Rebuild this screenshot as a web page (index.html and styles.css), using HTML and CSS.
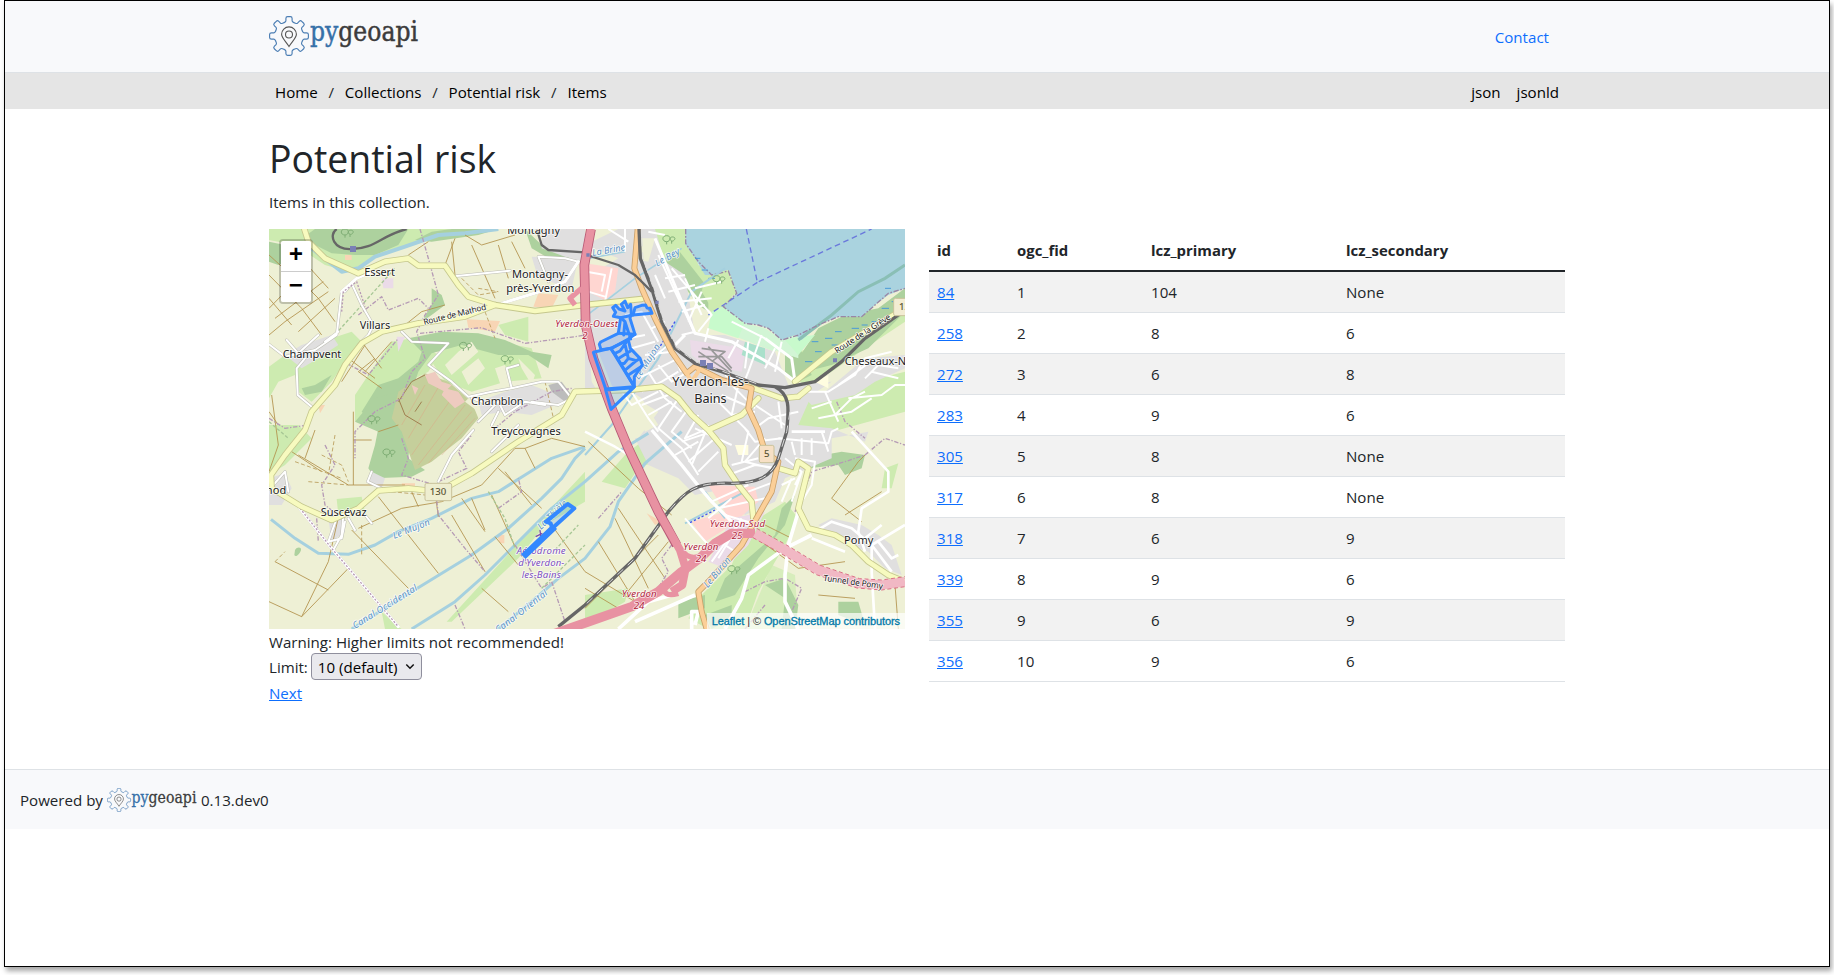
FILE: index.html
```html
<!DOCTYPE html>
<html lang="en">
<head>
<meta charset="utf-8">
<title>Potential risk - pygeoapi</title>
<link rel="stylesheet" href="styles.css">
</head>
<body>
<svg class="defs" width="0" height="0" aria-hidden="true">
  <defs>
    <path id="tooth" d="M-5.5-13C-4.6-13.8-3.1-13.7-3.1-15.2V-17.5Q-3.1-19.4-1.4-19.4H1.4Q3.1-19.4 3.1-17.5V-15.2C3.1-13.7 4.6-13.8 5.5-13"/>
    <symbol id="logo" viewBox="0 0 150 40">
      <g fill="none" stroke="#4a7db3" stroke-width="1.15" transform="translate(20 20)">
        <use href="#tooth"/><use href="#tooth" transform="rotate(45)"/><use href="#tooth" transform="rotate(90)"/><use href="#tooth" transform="rotate(135)"/>
        <use href="#tooth" transform="rotate(180)"/><use href="#tooth" transform="rotate(225)"/><use href="#tooth" transform="rotate(270)"/><use href="#tooth" transform="rotate(315)"/>
      </g>
      <g fill="none" stroke="#555" stroke-width="1.1">
        <path d="M20 30.5C17 25.500 12.600 22 12.600 18.300A7.400 7.400 0 0 1 27.400 18.300C27.400 22 23 25.500 20 30.500Z"/>
        <circle cx="20" cy="18.500" r="3.500"/>
      </g>
      <text x="41" y="25.300" class="logo-text" textLength="108" lengthAdjust="spacingAndGlyphs"><tspan class="py">py</tspan><tspan class="geo">geoapi</tspan></text>
    </symbol>
  </defs>
</svg>
<div class="page">
  <header class="top">
    <div class="container top-row">
      <svg class="logo" role="img" aria-label="pygeoapi"><use href="#logo"/></svg>
      <a class="contact" href="#">Contact</a>
    </div>
  </header>
  <div class="crumbs">
    <div class="container crumbs-row">
      <nav class="trail"><a href="#">Home</a><span>/</span><a href="#">Collections</a><span>/</span><a href="#">Potential risk</a><span>/</span><a href="#">Items</a></nav>
      <nav class="formats"><a href="#">json</a><a href="#">jsonld</a></nav>
    </div>
  </div>
  <main class="container main">
    <h1>Potential risk</h1>
    <p class="lead">Items in this collection.</p>
    <div class="cols">
      <section class="col">
        <div class="map">
          <svg class="tiles" viewBox="12 12 1908 1200" preserveAspectRatio="none">
            <rect x="0" y="0" width="1930" height="1230" fill="#eef0d5"/>
            <!-- grass -->
            <g fill="#cdebb0">
              <path d="M12 12H560L440 55 300 110 285 150 180 120 90 60 12 45Z"/>
              <path d="M12 425L60 390 110 420 200 340 260 320 290 350 240 410 200 470 140 530 100 500 90 450 40 470 12 520Z"/>
              <path d="M380 350L440 340 520 390 490 440 430 470 370 520 270 590 270 510 330 420Z"/>
              <path d="M560 330L700 350 800 370 830 460 720 470 620 500 540 470 500 410Z"/>
              <path d="M700 300L790 275 790 350 720 330Z"/>
              <path d="M12 600L100 600 140 640 60 720 12 750Z"/>
              <path d="M215 822L290 815 300 860 220 870Z"/>
              <path d="M750 965L960 740 960 830 840 900 760 1000 560 1190 545 1190Z"/>
              <path d="M350 1160L400 1205 410 1212 360 1212Z"/>
              <path d="M1010 770L1080 690 1180 610 1290 615 1240 680 1120 730 1080 790Z"/>
              <path d="M1440 1212L1480 1100 1530 1010 1560 960 1600 880 1560 830 1450 900 1400 1020 1310 1110 1270 1180 1330 1212Z"/>
              <path d="M1560 440L1600 380 1700 350 1920 200 1920 290 1800 370 1700 440 1620 480Z"/>
              <path d="M1600 520L1920 440 1920 560 1720 615 1560 640 1540 580Z"/>
              <path d="M960 1110L1090 1090 1080 1130 960 1200Z"/>
              <path d="M1150 12H1262L1300 120 1370 170 1410 230 1350 270 1200 140 1130 100Z"/>
              <path d="M1860 730L1900 715 1880 790 1850 790Z"/>
              <path d="M1520 1020L1590 1050 1600 1212 1440 1212Z" opacity=".7"/>
            </g>
            <!-- woods -->
            <g fill="#add19e">
              <path d="M150 12H430L400 60 330 90 270 90 200 85 150 60 125 30Z"/>
              <path d="M12 50L60 60 90 100 40 120 12 110Z"/>
              <path d="M430 340L530 320 640 325 720 345 800 380 860 390 850 430 790 390 700 390 590 360 500 385 460 440 440 500 400 540 440 600 430 700 480 735 440 755 330 760 310 730 330 660 340 610 290 560 340 480 400 460 460 410 470 380Z"/>
              <path d="M270 590L330 520 400 500 380 560 410 620 340 620Z"/>
              <path d="M450 45L500 20 560 12H700L640 30 500 50Z"/>
              <path d="M780 12L830 60 900 80 950 90 940 110 860 105 800 70Z"/>
              <path d="M1200 110L1240 75 1330 190 1330 260 1300 240Z"/>
              <path d="M1660 310L1740 270 1840 250 1920 190V260L1810 370 1700 420 1620 440 1600 400Z"/>
              <path d="M1530 930L1550 850 1590 810 1560 900 1480 1000 1410 1110 1350 1130 1380 1060Z"/>
              <path d="M1620 700L1730 680 1800 690 1790 730 1740 750 1720 720 1630 730Z"/>
              <path d="M1240 1130L1320 1110 1320 1150 1240 1180Z"/>
              <path d="M1500 1080L1560 1060 1600 1140 1590 1212H1550L1560 1120Z"/>
              <path d="M1320 1170L1400 1140 1400 1180 1340 1212Z"/>
              <path d="M1720 1130L1780 1130 1800 1200 1720 1170Z"/>
              <path d="M1560 340L1610 380 1640 450 1600 470 1560 440Z"/>
              <path d="M500 190L530 210 540 240 500 270 470 290 500 240Z"/>
              <path d="M90 975C95 965 110 965 108 975S92 1000 88 990Z"/>
              <path d="M110 490L150 480 200 450 170 500 120 510Z"/>
            </g>
            <!-- scrub and orchard on the hill -->
            <path fill="#c5cf9b" d="M480 445L550 470 620 530 640 580 590 640 500 710 450 735 410 620 380 580 400 500Z"/>
            <g stroke="#e0a080" stroke-width="1.500" opacity=".8"><path d="M410 600L480 480M430 640L530 470M440 690L560 520M460 720L600 540M490 715L620 560M530 690L630 580"/></g>
            <g stroke="#a08050" stroke-width="3" fill="none"><path d="M400 530L440 470 480 450M400 520L420 570 470 600M450 560L470 530"/></g>
            <g fill="#eecbc0"><path d="M480 450L510 440 530 470 560 480 540 500 490 475ZM540 490L580 500 600 530 570 550 530 510ZM440 480L460 490 450 510Z"/></g>
            <g fill="#eef0d5"><path d="M540 420L580 380 620 350 640 380 560 450ZM590 440L640 400 660 430 610 480ZM690 430L720 420 740 480 710 490ZM760 400L810 450 800 480 770 430ZM640 560L600 530 620 510Z"/></g>
            <!-- built-up areas -->
            <g fill="#e0dfdf">
              <path d="M60 390L110 360 200 330 220 360 160 400 110 430Z"/>
              <path d="M830 12H960V110L900 95 830 70ZM800 95L940 100 920 190 820 160Z"/>
              <path d="M1060 12H1170L1200 110 1260 150 1290 330 1380 330 1530 380 1570 480 1700 470 1640 510 1600 600 1700 610 1800 650 1810 620 1700 640 1700 700 1560 760 1530 830 1440 870 1370 780 1180 690 1120 640 1180 560 1080 500 960 500 960 60Z"/>
              <path d="M1680 500L1800 400 1920 390 1920 430 1830 470 1770 510 1640 540 1600 500Z"/>
              <path d="M640 530L720 500 800 480 850 500 900 490 920 520 800 570 720 560 650 570Z"/>
              <path d="M12 760L60 745 80 790 50 840 12 840ZM190 880L240 870 240 920 200 950Z"/>
              <path d="M320 740L360 760 350 790 310 780Z"/>
              <path d="M1660 900L1700 880 1790 900 1840 930 1880 960 1910 1050 1860 1030 1810 980 1750 960Z"/>
              <path d="M1110 640L1240 615 1390 790 1290 810 1240 760 1150 720Z"/>
            </g>
            <path fill="#bcbcbc" d="M850 480L890 470 920 510 900 530 860 500Z"/>
            <g fill="#eef0d5"><path d="M1120 40H1170L1150 110 1100 100ZM970 330L1000 380 1040 480 1110 620 1080 640 980 470ZM1100 500L1130 520 1180 600 1140 620ZM960 60L1060 100 1010 130 960 130Z"/></g>
            <g fill="#ffd6d1"><path d="M1330 780L1470 785 1480 830 1400 900 1320 950 1280 890 1380 860ZM960 115L1060 130 1050 200 1020 225 970 200Z"/></g>
            <g fill="#ebdbe8"><path d="M1275 345L1400 365 1400 440 1330 430 1280 390ZM350 160H385V190H355ZM395 335H420L400 380Z"/><path d="M1400 880L1500 860 1450 960 1380 1030 1330 1010ZM1400 360L1440 380 1430 440 1370 430Z"/></g>
            <g fill="#f8d5b5"><path d="M605 283L705 288 690 320 610 308ZM820 205L880 210 860 250 805 245ZM240 90H260V105H240ZM160 540H180L165 565ZM695 930H718V955H705ZM1145 865L1190 890 1170 900ZM410 775H450V795H415Z"/></g>
            <g fill="#d2f5d5"><path d="M1330 270L1380 245 1440 295 1500 310 1560 350 1530 380 1400 330ZM1500 340L1600 330 1600 400 1540 380Z"/></g>
            <g fill="#c8facc"><path d="M1340 260L1380 240 1440 290 1420 340 1330 310ZM1560 345L1600 335 1650 330 1600 390Z"/></g>
            <path fill="#aae0cb" d="M1440 350L1500 370 1500 420 1430 390Z"/>
            <g fill="#fffde0"><path d="M1410 660H1450V690H1420ZM1290 420L1330 430 1320 450ZM1650 470L1690 450V490Z"/></g>
            <!-- lake -->
            <path fill="#aad3df" d="M1262 12V60L1290 100 1320 150 1350 150 1390 135 1415 205 1375 245 1440 295 1480 300 1510 310 1550 345 1590 330 1610 345 1660 300 1720 275 1790 275 1830 240 1870 210 1920 190V12Z"/>
            <path fill="#cdebb0" d="M1320 160L1365 140 1390 135 1415 205 1340 250 1310 200Z"/>
            <path fill="none" stroke="#8abfb5" stroke-width="9" d="M1600 345L1700 270 1780 200 1860 160 1920 120"/>
            <path fill="none" stroke="#9a86a5" stroke-width="4" stroke-dasharray="16 5 5 5" d="M1262 12V55L1300 110 1340 150 1362 145 1390 138 1415 205 1375 245 1440 295 1480 300 1510 310 1550 345 1600 330 1660 300 1720 275 1790 275 1830 240 1870 205 1920 190"/>
            <path fill="none" stroke="#6a78dc" stroke-width="4" stroke-dasharray="17 11" d="M1444 12L1477 172 1820 12M1477 172L1330 270"/>
            <g stroke="#4a9bd8" stroke-width="3"><path d="M1310 135h18M1330 160h20M1290 100h16M1640 350h20M1680 340h22M1700 360h24M1650 380h20M1710 320h20M1760 310h22M1820 290h20M1740 345h18M1620 410h22M1670 400h18M1850 250h22M1880 230h18M1790 300h18M1690 380h20M1860 190h18"/></g>
            <!-- streams and canals -->
            <g fill="none" stroke="#a5d0df" stroke-linejoin="round" stroke-width="9">
              <path d="M140 70L230 140 280 130 330 95 420 65 520 30 600 25 700 12" stroke-width="12"/>
              <path d="M18 883L90 940 160 985 250 988 330 960 400 920 500 880 620 820 700 800 780 750 860 700 960 665"/>
              <path d="M260 1212L440 1100 620 990 730 910 830 820 890 760 930 700 960 670"/>
              <path d="M440 1212L570 1130 660 1050 750 960 860 850 960 770 1060 680 1150 625"/>
              <path d="M700 1212L800 1130 880 1060 960 1000 1035 905 1060 830 1140 715 1250 620"/>
              <path d="M960 690L1040 600 1110 500 1180 400 1225 310 1280 200 1380 130M1320 800L1380 880M1260 895L1440 800" stroke-width="6"/>
              <path d="M940 290L1020 230 1110 160 1250 70M970 100L1080 80" stroke-width="5"/>
            </g>
            <path fill="none" stroke="#4055ee" stroke-width="4" stroke-dasharray="7 6" d="M1230 290L1170 390 1150 415M1275 893L1350 855"/>
            <!-- farm tracks and footpaths -->
            <g fill="none" stroke="#b3924c" stroke-width="2.600">
              <path d="M12 250L130 130M30 280L175 170M12 330L60 290 190 200M100 320L210 220M12 150L110 250 170 330M50 110L160 220 210 290M90 80L190 190M12 220L80 300M12 90L100 170"/>
              <path d="M250 400L330 460M290 350L350 430M300 360L230 470M330 400L280 440 350 490M380 350L300 440M420 300L470 260 540 240"/>
              <path d="M490 50L430 90M570 40L540 120M600 30L650 60 750 30M620 60L690 220M560 50L570 150M700 60L730 160M740 50L780 130"/>
              <path d="M12 560L40 600M80 680L170 740M150 615L120 700M265 560V780M265 645H320M100 690L250 780 420 780M620 820L660 915M700 730L830 850M590 820L660 920M440 800L460 845M510 800L520 875"/>
              <path d="M280 910L410 850 530 830 650 780 750 670 780 670 860 640 960 665M340 815L520 1045M260 915L430 1090M225 855L190 1010 110 1175M30 1010L190 1095M250 1030L110 1175 12 1130M560 870L660 1040M680 810L750 965M720 740L800 840M780 670L810 730M650 1090L730 1160M860 900L960 1040M690 935L760 1020"/>
              <path d="M20 510L40 660 12 740M340 620L400 600"/>
              <path d="M960 1090L1060 1150M960 1040L1110 1130M1050 880L1150 1090M1000 950L1110 1130M960 1150L1180 930M1080 1110L1210 950M1120 790L1220 870M1060 850L1200 1060M1700 820L1780 710 1800 690M1700 820L1790 890M1490 950L1600 1030 1740 1010M1660 1110L1770 1120M1890 1080L1900 1212M1500 900L1580 940M970 650L1120 790M1740 870L1850 800"/>
            </g>
            <g fill="none" stroke="#b3924c" stroke-width="2.300" stroke-dasharray="12 7">
              <path d="M170 690L230 720 250 770M130 770L250 780M90 710L230 760M210 630L190 750M640 190L700 200M590 160L640 210 700 200M660 260L690 340M290 900V990M30 1010L60 980M840 470L870 600M380 800L480 810"/>
            </g>
            <g fill="none" stroke="#b59ab5" stroke-width="4" stroke-dasharray="13 5 4 5">
              <path d="M465 12L490 100 520 210 480 270 455 320 480 400 440 440 410 520 330 560 270 620 270 700M280 270L350 215 370 255 460 220 490 250M465 325L650 308 780 355 930 335 960 330M245 415L310 450 400 340M410 640L430 700 410 750 510 780 520 870 600 970 660 1040M180 660L210 720 170 780 180 840 230 880M155 880L160 950M520 770L605 730 580 680 620 630M700 850L770 800 760 760M750 960L830 1090 860 1070 900 1190M570 1140L600 1212M12 580L60 610 130 600M690 610L750 560 860 500 920 490"/>
              <path d="M1220 960L1190 1000 1210 1040 1160 1120M1590 860L1640 740 1740 710 1800 690 1860 640 1920 660M1440 1100L1500 1070 1560 1060 1610 1090 1580 1160M1715 530L1740 590 1800 640M1500 1140L1440 1212M1000 880L1070 800"/>
            </g>
            <path fill="none" stroke="#a7c795" stroke-width="4" stroke-dasharray="10 6" d="M12 590L70 640M200 340L390 130M670 800L720 880 750 970M870 975L940 900M830 1090L960 960"/>
            <!-- minor roads -->
            <g fill="none" stroke="#bdbdb4" stroke-linejoin="round" stroke-linecap="round">
              <g stroke-width="9">
                <path id="minor" d="M12 358L60 395 150 375 215 330 230 200 275 160 320 140M65 345L100 385 160 330M120 400L95 430 98 510 140 545M180 350L220 320M240 200L260 175 290 240 325 300 310 330 280 360M410 320L440 350 550 355 490 420 560 470 610 515 680 500 740 490 830 470 880 470 920 520 880 540 800 530M740 490L725 430 760 420M640 590L700 530 720 570 780 530 840 540M680 600L700 560M620 520L680 540M710 235L840 195 900 170 940 110 900 100 820 95 850 170M575 153L735 137M625 615L560 690 520 770M680 680L760 600M320 740L308 770 350 790M100 845L200 970 400 1205M215 880L190 950 230 940 240 890M205 975L230 930 235 870M250 880L270 915M300 870L320 895M25 780L60 740 70 800"/>
              </g>
            </g>
            <g fill="none" stroke="#fff" stroke-linejoin="round" stroke-linecap="round" stroke-width="6">
              <use href="#minor"/>
              <path stroke-width="9" d="M230 200L275 160 320 140M710 235L840 195 900 170 940 110M100 845L200 970 400 1205"/>
            </g>
            <path fill="none" stroke="#b79ab5" stroke-width="4" stroke-dasharray="6 5" d="M230 260L235 200 275 170 300 245M105 850L200 970 400 1205"/>
            <!-- town streets -->
            <g fill="none" stroke="#fff" stroke-width="6" stroke-linejoin="round">
              <path d="M965 140L1020 150 1010 200M970 200L1020 215M1030 12L1090 50M1080 12V80M1040 130L1020 230M1180 90L1230 200 1290 325M1200 160L1260 150M1210 200L1290 180M1240 230L1340 220M1250 260L1320 240M1270 290L1310 200M1220 130L1340 270 1300 320M1260 160L1310 270M1170 150L1200 220M1150 20L1200 30M1290 320L1250 330M1370 170L1290 190"/>
              <path stroke-width="9" d="M1170 40L1290 325 1400 350 1540 430 1590 470M1500 340L1580 400 1590 470M1260 330L1220 370 1250 440"/>
              <path d="M1420 345L1390 400M1450 350L1440 430M1490 330L1450 440M1530 370L1500 430M1330 310L1320 350M1400 290L1500 340M1550 350L1530 440M1380 450L1440 480M1450 440L1430 490"/>
              <path d="M1090 340L1140 330M1100 370L1170 350M1080 270L1130 260 1180 350M1160 250L1220 350 1140 420M1200 290L1160 310M1140 390L1220 380M1120 460L1240 400M1130 500L1190 470 1240 440M1100 500L1150 580 1180 620M1150 440L1200 520 1250 560M1180 420L1220 470 1270 440M1070 500L1100 540 1180 500M1130 540L1210 510M1150 570L1220 530"/>
              <path d="M1240 520L1180 610 1250 670 1300 750M1270 550L1220 620 1280 670M1300 570L1260 640 1330 610M1330 600L1280 720M1290 610L1400 660M1250 650L1340 620M1230 690L1300 650M1270 710L1350 640M1300 740L1360 680M1350 520L1400 570 1470 560M1390 470L1470 550M1370 510L1440 540M1420 480L1400 570M1470 610L1510 580 1600 560M1440 610L1470 650 1550 640M1400 570L1450 620 1430 710M1500 640L1440 710 1520 730M1470 540L1560 600M1540 530L1550 610M1390 750L1470 720 1540 730M1450 800L1530 770M1400 720L1480 700"/>
              <path stroke-width="10" d="M1160 615L1250 720 1290 770 1340 830 1400 890"/>
              <path stroke-width="7" d="M1100 695L1050 665 960 620"/>
              <path d="M1340 830L1450 780M1360 850L1500 820M1330 880L1400 820M1380 870L1480 900M1430 880L1390 940 1340 1010M1420 900L1360 1000M1380 960L1410 980M1260 880L1330 960"/>
              <path d="M1540 640L1690 655 1700 620 1720 610M1580 650L1590 690M1610 640V690M1640 640V690M1670 620L1690 680M1580 760L1550 830M1610 740L1580 830M1560 700L1610 740 1590 780M1550 780L1590 760M1590 700L1650 710 1640 780 1610 830"/>
              <path d="M1620 500L1690 500 1770 450 1800 400 1880 380M1680 500L1720 590M1720 480L1830 400M1750 520L1850 510 1890 480 1920 480M1800 460L1840 420 1900 430M1660 580L1760 560 1820 520M1710 570L1760 520 1800 500M1820 440L1900 460M1640 550L1700 530"/>
              <path stroke-width="11" d="M1600 860L1570 960 1560 1050 1560 1130 1600 1212M1640 930L1560 970 1450 1050 1430 1120 1380 1212M1240 1105L1150 1130 1060 1212M1290 1110L1200 1150 1110 1190M1280 1212L1280 1160 1300 1160 1290 1200"/>
              <path stroke-width="8" d="M1760 620L1870 740 1870 800 1790 850 1780 920 1800 980M1650 920L1700 890 1760 910 1820 960 1920 900M1820 960V1040L1830 1212M1640 940L1740 980M1820 960L1880 1040M1840 950L1880 1000 1900 990M1800 940L1850 900M1580 620L1680 620"/>
            </g>
            <!-- secondary and primary roads -->
            <g fill="none" stroke-linejoin="round" stroke-linecap="round">
              <g stroke="#c5c78d" stroke-width="19"><path id="yA" d="M118 12L130 50 180 100 280 145 360 110 430 100 460 122 540 122 580 180 610 215 690 240 810 258 960 240 1130 222M460 295L350 320 290 355 240 420 210 480 140 560 120 615 60 690 18 750 20 790 110 845 200 885 280 850 340 797 430 790 520 800 620 745 760 650 890 570 930 500 1090 495 1190 485 1240 520 1280 570 1330 615 1430 570 1480 520M690 240L600 275 460 295M1590 470L1700 380 1920 250M1330 615L1375 670 1380 720 1420 780 1460 830 1465 880"/><path id="yB" d="M1440 480L1550 520 1600 515M1540 730L1590 745 1600 710 1630 730 1620 770 1600 850 1630 910 1710 930 1760 960 1810 1010 1870 1050 1920 1070M1600 515L1630 490"/></g>
              <g stroke="#f7fabf" stroke-width="14"><use href="#yA"/><use href="#yB"/></g>
              <g stroke="#c9a06a" stroke-width="18"><path id="oA" d="M1118 12L1108 130 1130 190 1170 280 1220 380 1265 445 1290 425 1370 465 1460 490 1450 550 1480 615 1500 680 1540 710 1520 800 1480 870 1430 960 1340 1060 1300 1100 1310 1160 1325 1212"/></g>
              <path d="M1118 12L1108 130 1130 190 1170 280 1220 380 1265 445 1290 425 1370 465 1460 490 1450 550 1480 615 1500 680 1540 710 1520 800 1480 870 1430 960 1340 1060 1300 1100 1310 1160 1325 1212" stroke="#fbcf98" stroke-width="13"/>
              <path d="M1265 445L1280 470 1300 440" stroke="#fbcf98" stroke-width="12"/>
            </g>
            <!-- railway -->
            <g fill="none" stroke="#666" stroke-linejoin="round">
              <path stroke-width="7" d="M215 12C190 30 205 75 260 72C330 72 350 30 425 12M815 12L830 60 850 75 960 82M965 90L1060 120 1110 150 1160 200"/>
              <path stroke-width="10" d="M1122 12L1126 100 1160 190 1190 290 1230 370 1290 415 1370 440 1480 480 1560 488 1650 470 1730 410 1800 340 1900 270 1920 255M1530 485C1580 510 1570 560 1565 620L1540 700C1520 760 1470 775 1400 775C1290 770 1260 800 1210 860L1110 1000 960 1140 880 1205"/>
              <path stroke="#ddd" stroke-width="3" stroke-dasharray="24 18" d="M1130 40L1134 100 1165 190 1196 290 1235 370 1290 410 1370 438 1480 478M1575 560L1565 620 1540 700C1520 760 1470 775 1400 775C1290 770 1260 800 1210 860L1110 1000 960 1140"/>
              <path stroke="#999" stroke-width="5" d="M1300 380L1390 440M1310 370L1380 380 1340 410M1300 395H1370L1400 430M1330 365L1400 440"/>
            </g>
            <!-- motorway -->
            <g fill="none" stroke-linejoin="round">
              <path stroke="#b85a76" stroke-width="29" d="M978 12L958 120 962 300 985 400 1040 550 1090 670 1180 860 1235 960"/>
              <path stroke="#e892a2" stroke-width="24" d="M978 12L958 120 962 300 985 400 1040 550 1090 670 1180 860 1245 975 1262 1030 1252 1080 1220 1100"/>
              <path stroke="#e892a2" stroke-width="28" d="M870 1225L960 1194 1100 1145 1180 1100 1250 1040 1310 995 1350 955 1400 925 1470 925"/>
              <path stroke="#e892a2" stroke-width="16" d="M1250 975Q1275 1010 1310 990M1240 1105Q1190 1120 1200 1080M930 240L915 220 950 190"/>
              <path stroke="#f1b8c4" stroke-width="28" d="M1470 925L1560 975 1660 1035 1780 1075 1850 1080 1920 1070"/>
              <path stroke="#dc6f88" stroke-width="3" stroke-dasharray="12 8" d="M1475 910L1566 961 1666 1021 1784 1061 1850 1065 1920 1055M1464 938L1554 989 1654 1049 1776 1089 1850 1095 1920 1085"/>
            </g>
            <g fill="#7a80b5"><path d="M255 63h18v18h-18zM1305 405h18v18h-18zM1326 414h18v18h-18zM1704 400h12v12h-12zM964 85h10v10h-10zM1171 227h10v10h-10z"/></g>
            <g fill="none" stroke="#7fae75" stroke-width="3"><path id="tr" d="M240 30C225 30 225 12 240 12S252 30 240 30V38M255 28C246 24 250 14 260 16S262 30 255 28V36"/><use href="#tr" x="355" y="340"/><use href="#tr" x="480" y="380"/><use href="#tr" x="80" y="560"/><use href="#tr" x="125" y="660"/><use href="#tr" x="965" y="20"/><use href="#tr" x="1115" y="140"/><use href="#tr" x="1160" y="1010"/></g>
            <path fill="none" stroke="#7a4fa8" stroke-width="4" d="M812 935L832 925M825 915L828 942"/>
            <!-- road shields -->
            <g stroke="#c9c29b" stroke-width="3"><rect x="480" y="775" width="80" height="52" rx="5" fill="#eeeed0"/><rect x="1483" y="661" width="44" height="52" rx="5" fill="#f7e0c5"/><rect x="1886" y="220" width="60" height="52" rx="5" fill="#f2ecd2"/></g>
            <!-- place labels -->
            <g class="label place">
              <text x="298" y="153" textLength="92">Essert</text><text x="284" y="313" textLength="92">Villars</text><text x="53" y="400" textLength="176">Champvent</text>
              <text x="727" y="26" textLength="158">Montagny</text><text x="741" y="159" textLength="168">Montagny-</text><text x="724" y="201" textLength="204">près-Yverdon</text>
              <text x="618" y="541" textLength="158">Chamblon</text><text x="679" y="629" textLength="208">Treycovagnes</text><text x="167" y="873" textLength="138">Suscévaz</text><text x="2" y="808" textLength="62">hod</text>
              <text x="1739" y="420" textLength="204">Cheseaux-No</text><text x="1737" y="957" textLength="88">Pomy</text>
            </g>
            <g class="label town"><text x="1222" y="484" textLength="228">Yverdon-les-</text><text x="1288" y="535" textLength="97">Bains</text></g>
            <g class="label shield"><text x="494" y="811" textLength="50">130</text><text x="1497" y="697">5</text><text x="1902" y="256">13</text></g>
            <g class="label road"><text transform="translate(478 300) rotate(-14)" textLength="193">Route de Mathod</text><text transform="translate(1716 386) rotate(-33)" textLength="194">Route de la Grève</text><text transform="translate(1674 1067) rotate(8)" textLength="180">Tunnel de Pomy</text></g>
            <g class="label water"><text transform="translate(388 942) rotate(-22)" textLength="117">Le Mujon</text><text transform="translate(270 1212) rotate(-32)" textLength="223">Canal Occidental</text><text transform="translate(700 1225) rotate(-38)" textLength="190">Canal Oriental</text><text transform="translate(1121 465) rotate(-57)" textLength="120">Le Mujon</text><text transform="translate(983 93) rotate(-10)" textLength="100">La Brine</text><text transform="translate(1177 125) rotate(-30)" textLength="80">Le Bey</text><text transform="translate(1328 1090) rotate(-50)" textLength="110">Le Buron</text><text transform="translate(828 915) rotate(-44)" textLength="112">La Thièle</text></g>
            <g class="label exit"><text x="871" y="306" textLength="188">Yverdon-Ouest</text><text x="952" y="342">2</text><text x="1334" y="906" textLength="166">Yverdon-Sud</text><text x="1400" y="943">25</text><text x="1255" y="974" textLength="105">Yverdon</text><text x="1292" y="1011">24</text><text x="1070" y="1115" textLength="105">Yverdon</text><text x="1106" y="1152">24</text></g>
            <g class="label aero"><text x="755" y="986" textLength="147">Aérodrome</text><text x="760" y="1022" textLength="138">d'Yverdon-</text><text x="770" y="1058" textLength="118">les-Bains</text></g>
            <!-- collection features -->
            <g fill="#38f" fill-opacity=".2" stroke="#38f" stroke-width="9" stroke-linejoin="round" stroke-linecap="round">
              <path d="M985 382L1037 370 1050 388 1068 417 1108 485 1022 492Z"/>
              <path d="M1022 495L1106 488 1038 553Z"/>
              <path d="M1003 358L1007 351 1060 325 1067 278 1045 274 1052 262 1043 248 1052 241 1062 252 1080 258 1069 238 1080 228 1088 248 1097 238 1099 264 1095 280 1110 328 1090 342 1040 370 1008 374Z"/>
              <path d="M1104 270L1110 248 1130 241 1142 240 1146 249 1155 250 1161 265Z"/>
              <path d="M1037 370L1090 345 1096 370 1125 400 1132 420 1108 455 1108 485Z"/>
              <path d="M1050 385L1065 378 1085 350M1058 402L1100 376M1078 415L1090 400 1114 407 1122 402M1083 433L1114 407M1068 417L1078 415M1090 450L1128 425M1090 400L1080 358M1067 278L1080 290 1097 342M1080 290L1076 330M1067 278L1104 270M1060 325L1110 328" fill="none"/>
              <path stroke-width="12" d="M843 890L908 837 928 850 862 910 857 895Z"/>
              <path stroke-width="20" d="M782 988L862 912" stroke-linecap="square"/>
            </g>
          </svg>
          <div class="zoomer"><button type="button">+</button><button type="button">−</button></div>
          <div class="credit"><a href="#">Leaflet</a> | © <a href="#">OpenStreetMap contributors</a></div>
        </div>
        <div class="warn">Warning: Higher limits not recommended!</div>
        <div class="limit">Limit: <span class="select">10 (default)<svg width="10" height="7" viewBox="0 0 10 7"><path d="M1.300 1.500L5 5.200 8.700 1.500" fill="none" stroke="#111" stroke-width="1.500"/></svg></span></div>
        <div class="next"><a href="#">Next</a></div>
      </section>
      <section class="col">
        <table>
          <colgroup><col class="c-id"><col class="c-fid"><col class="c-pri"><col></colgroup>
          <thead><tr><th>id</th><th>ogc_fid</th><th>lcz_primary</th><th>lcz_secondary</th></tr></thead>
          <tbody>
            <tr><td><a href="#">84</a></td><td>1</td><td>104</td><td>None</td></tr>
            <tr><td><a href="#">258</a></td><td>2</td><td>8</td><td>6</td></tr>
            <tr><td><a href="#">272</a></td><td>3</td><td>6</td><td>8</td></tr>
            <tr><td><a href="#">283</a></td><td>4</td><td>9</td><td>6</td></tr>
            <tr><td><a href="#">305</a></td><td>5</td><td>8</td><td>None</td></tr>
            <tr><td><a href="#">317</a></td><td>6</td><td>8</td><td>None</td></tr>
            <tr><td><a href="#">318</a></td><td>7</td><td>6</td><td>9</td></tr>
            <tr><td><a href="#">339</a></td><td>8</td><td>9</td><td>6</td></tr>
            <tr><td><a href="#">355</a></td><td>9</td><td>6</td><td>9</td></tr>
            <tr><td><a href="#">356</a></td><td>10</td><td>9</td><td>6</td></tr>
          </tbody>
        </table>
      </section>
    </div>
  </main>
  <footer class="foot">Powered by <svg class="logo-small" role="img" aria-label="pygeoapi"><use href="#logo"/></svg> 0.13.dev0</footer>
</div>
</body>
</html>
```
FILE: styles.css
```css
* { box-sizing: border-box; }
html { height: 100%; overflow: hidden; background: #fff; }
body {
  margin: 0;
  padding: 0 4px 8px;
  height: 975px;
  font: 15.1px/24px "Open Sans", "Noto Sans", sans-serif;
  color: #212529;
}
.defs { position: absolute; }
.page {
  width: 1826px;
  height: 967px;
  border: 1px solid #000;
  background: #fff;
  box-shadow: 2px 4px 5px rgba(0, 0, 0, .35);
}
.container { width: 1320px; margin: 0 auto; padding: 0 12px; }
a { color: #0d6efd; }

.top { height: 72px; background: #f8f9fb; border-bottom: 1px solid #dee2e6; }
.top-row { display: flex; justify-content: space-between; padding-top: 15px; }
.logo { width: 150px; height: 40px; }
.logo-text { font: 28px "DejaVu Serif", serif; stroke-width: .5px; }
.py { fill: #3670a8; stroke: #3670a8; }
.geo { fill: #3c3c3c; stroke: #3c3c3c; }
.contact { margin: 9px 16px 0 0; text-decoration: none; }

.crumbs { height: 36px; background: #e5e5e5; }
.crumbs-row { display: flex; justify-content: space-between; padding: 7px 18px 0; }
.crumbs a { color: #000; text-decoration: none; }
.trail { display: flex; gap: 10.800px; }
.formats { display: flex; gap: 16px; }

.main { height: 660px; padding-top: 24px; }
h1 { margin: 2px 0 7px; font-size: 37.400px; font-weight: 400; line-height: 48px; }
.lead { margin: 0 0 15px; }
.cols { display: grid; grid-template-columns: 636px 636px; gap: 24px; }

.map { position: relative; height: 400px; overflow: hidden; }
.tiles { display: block; width: 636px; height: 400px; }
.label { paint-order: stroke; stroke: rgba(255, 255, 255, .75); stroke-width: 5px; stroke-linejoin: round; font-family: "Noto Sans", sans-serif; }
.place { font-size: 33px; fill: #222; }
.town { font-size: 38px; fill: #222; }
.shield { font-size: 29px; font-weight: 500; fill: #5c5636; stroke: none; }
.road { font-size: 25px; fill: #222; }
.water { font-size: 28px; font-style: italic; fill: #5b93c4; }
.exit { font-size: 29px; font-style: italic; fill: #b01c3c; }
.aero { font-size: 29px; font-style: italic; fill: #7d4fc0; }

.zoomer {
  position: absolute;
  left: 10px;
  top: 10px;
  width: 34px;
  border: 2px solid rgba(0, 0, 0, .2);
  border-radius: 4px;
  background-clip: padding-box;
}
.zoomer button {
  display: block;
  width: 30px;
  height: 30px;
  padding: 0;
  border: 0;
  background: #fff;
  font: bold 24px/30px "Liberation Mono", monospace;
  color: #000;
}
.zoomer button:first-child { height: 31px; border-bottom: 1px solid #ccc; border-radius: 2px 2px 0 0; }
.zoomer button:last-child { border-radius: 0 0 2px 2px; }
.credit {
  position: absolute;
  right: 0;
  bottom: 0;
  padding: 0 5px;
  background: rgba(255, 255, 255, .7);
  font: 11px/16px "Liberation Sans", Arial, sans-serif;
  letter-spacing: -.08px;
  color: #333;
}
.credit a { color: #0078a8; text-decoration: none; -webkit-text-stroke: .3px #0078a8; }

.warn { height: 24px; padding-top: 1px; }
.limit { display: flex; align-items: center; gap: 3px; height: 27px; }
.select {
  display: flex;
  align-items: center;
  justify-content: space-between;
  width: 111px;
  height: 27px;
  padding: 0 6px;
  border: 1px solid #8f8f9d;
  border-radius: 4px;
  background: #e9e9ed;
  color: #000;
}
.next { padding-top: 1px; }

table { width: 636px; border-collapse: collapse; table-layout: fixed; }
.c-id { width: 80px; }
.c-fid { width: 134px; }
.c-pri { width: 195px; }
th, td { padding: 8px; text-align: left; border-bottom: 1px solid #dee2e6; height: 41px; }
th { height: 42px; border-bottom: 2px solid #212529; font-size: 14.900px; }
tbody tr:nth-child(odd) { background: #f2f2f2; }

.foot {
  display: flex;
  align-items: center;
  gap: 4px;
  height: 60px;
  padding-left: 15px;
  border-top: 1px solid #dee2e6;
  background: #f8f9fb;
}
.logo-small { width: 90px; height: 24px; }
```
